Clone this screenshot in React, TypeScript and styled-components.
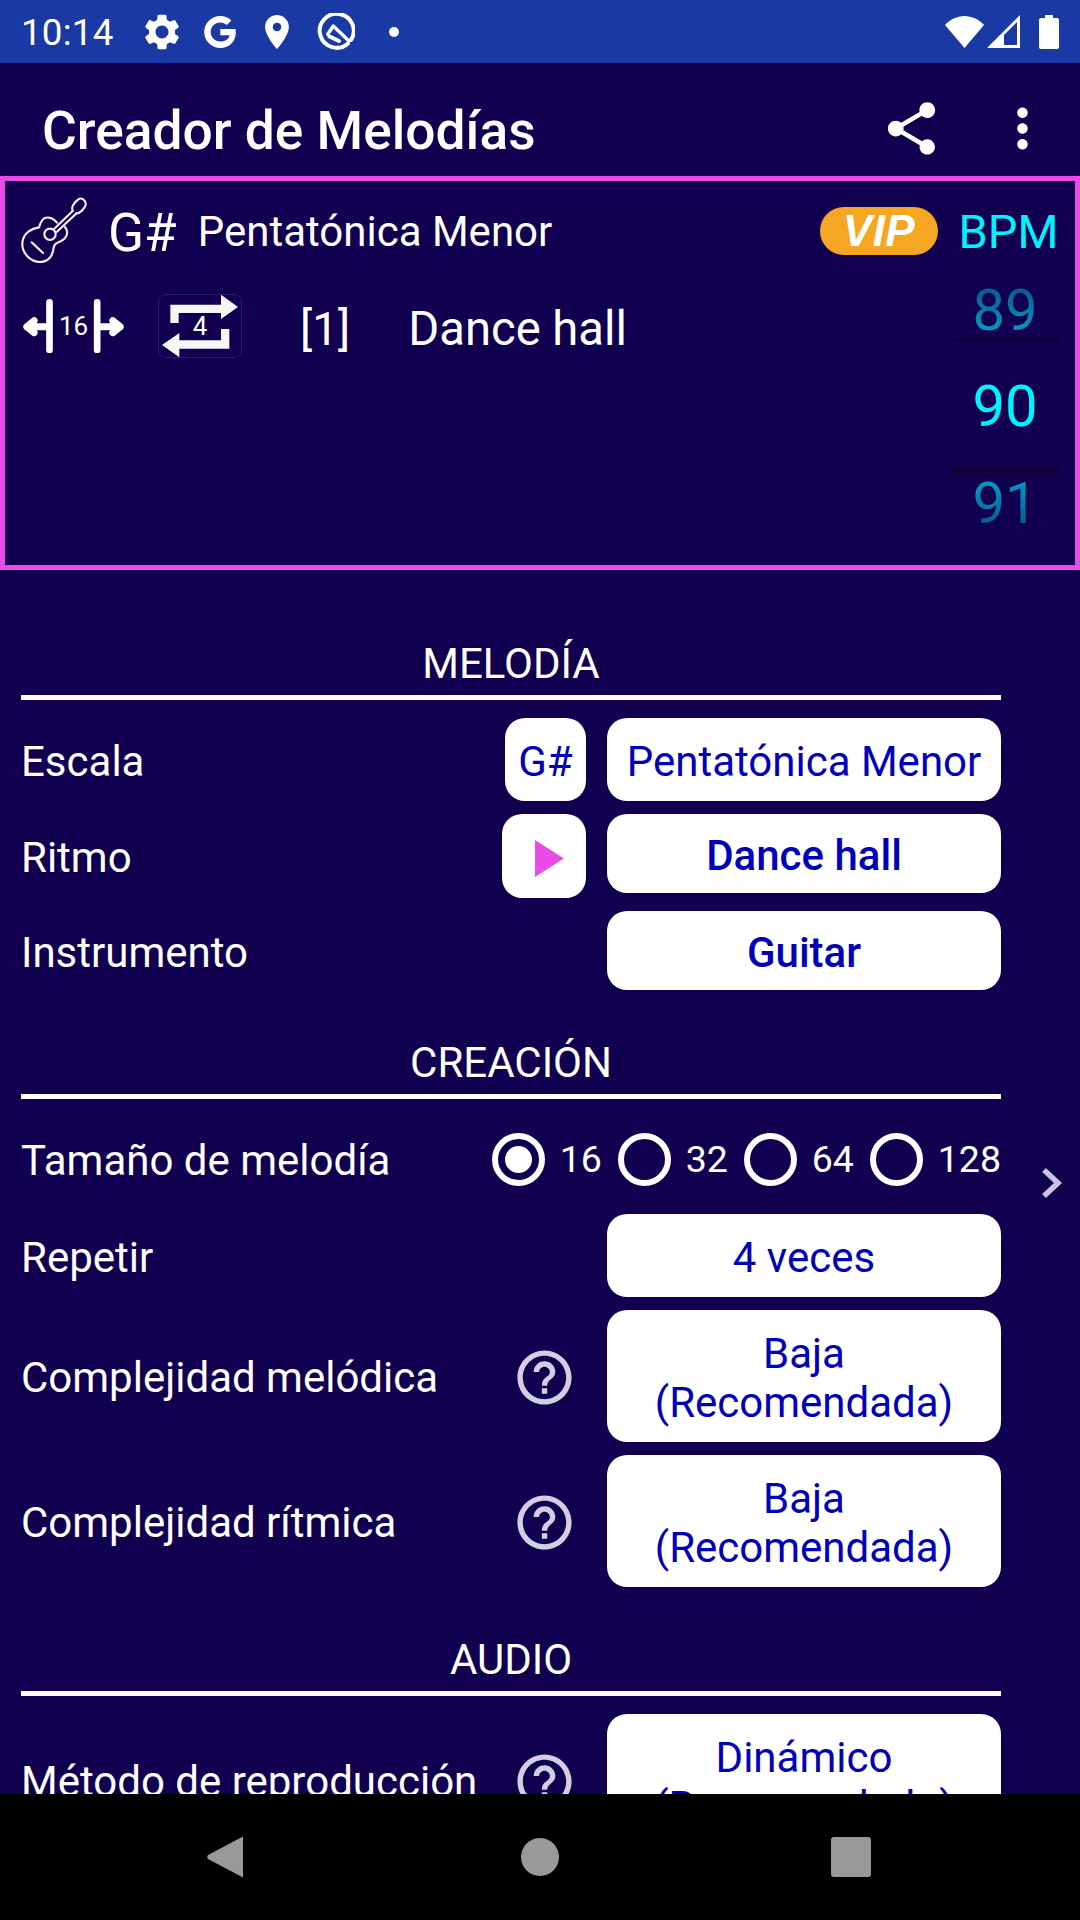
import React from "react";
import styled, { createGlobalStyle } from "styled-components";

const Global = createGlobalStyle`
  html, body { margin: 0; padding: 0; background: #110050; }
  * { box-sizing: border-box; }
`;

const Screen = styled.div`
  width: 1080px;
  height: 1920px;
  display: flex;
  flex-direction: column;
  overflow: hidden;
  background: #110050;
  color: #fff;
  font-family: Roboto, "Noto Sans", sans-serif;
`;

/* ---- system status bar ---- */
const StatusBar = styled.div`
  flex: none;
  height: 63px;
  background: #1a39a5;
  display: flex;
  align-items: center;
  padding: 0 21px;
`;
const Clock = styled.span`
  font-size: 36.75px;
  width: 123px;
  letter-spacing: 0.2px;
  padding-top: 2px;
`;
const StatusIcon = styled.svg<{ $w: number; $h: number; $gap?: number }>`
  width: ${(p) => p.$w}px;
  height: ${(p) => p.$h}px;
  margin-right: ${(p) => p.$gap ?? 0}px;
  flex: none;
  fill: #fff;
`;
const Spacer = styled.div`
  flex: 1;
`;

/* ---- action bar ---- */
const ActionBar = styled.div`
  flex: none;
  height: 113px;
  display: flex;
  align-items: center;
  padding: 17px 0 0 42px;
`;
const AppTitle = styled.h1`
  margin: 0;
  flex: 1;
  font-size: 53.3px;
  font-weight: 500;
  line-height: 1;
  padding-top: 8px;
`;
const BarIcon = styled.svg<{ $right: number }>`
  width: 63px;
  height: 63px;
  fill: #fff;
  margin-right: ${(p) => p.$right}px;
`;

/* ---- summary panel ---- */
const Panel = styled.section`
  flex: none;
  height: 394px;
  border: 5px solid #ea4ce9;
  display: flex;
  padding: 16px 16px 0 16px;
`;
const PanelMain = styled.div`
  flex: 1;
  display: flex;
  flex-direction: column;
`;
const SummaryRow = styled.div`
  display: flex;
  align-items: center;
  height: 66px;
`;
const SettingsRow = styled.div`
  display: flex;
  align-items: center;
  height: 64px;
  margin-top: 31px;
`;
const GuitarIcon = styled.svg`
  width: 66px;
  height: 66px;
  flex: none;
  fill: none;
  stroke: #f1eff7;
  stroke-width: 6.5px;
  stroke-linecap: round;
  stroke-linejoin: round;
`;
const KeyName = styled.span`
  font-size: 53px;
  margin-left: 21px;
  padding-top: 6px;
`;
const ScaleName = styled.span`
  font-size: 42px;
  margin-left: 21px;
  padding-top: 3px;
`;
const VipBadge = styled.span`
  margin-left: auto;
  margin-right: 16px;
  margin-top: 1px;
  width: 118px;
  height: 48px;
  border-radius: 24px;
  background: #f5a623;
  display: flex;
  align-items: center;
  justify-content: center;
  font-family: "Liberation Sans", sans-serif;
  font-style: italic;
  font-weight: 700;
  font-size: 44px;
  letter-spacing: 0.5px;
  color: #fff;
`;
const WidthMark = styled.div`
  width: 103px;
  height: 54px;
  margin-left: 1px;
  position: relative;
  display: flex;
  align-items: center;
  justify-content: center;
  font-size: 26px;
`;
const WidthArrows = styled.svg`
  position: absolute;
  inset: 0;
  width: 103px;
  height: 54px;
`;
const RepeatMark = styled.div`
  width: 84px;
  height: 64px;
  margin-left: 33px;
  border-radius: 8px;
  border: 1px solid #2a1b66;
  position: relative;
  display: flex;
  align-items: center;
  justify-content: center;
  font-size: 26px;
`;
const RepeatArrows = styled.svg`
  position: absolute;
  inset: -1px;
  width: 84px;
  height: 64px;
  fill: #f6f6f6;
`;
const Counter = styled.span`
  position: relative;
`;
const RhythmIndex = styled.span`
  font-size: 46px;
  margin-left: 58px;
  padding-top: 6px;
`;
const RhythmName = styled.span`
  font-size: 47.2px;
  margin-left: 58px;
  padding-top: 6px;
`;

const BpmColumn = styled.div`
  width: 105px;
  display: flex;
  flex-direction: column;
  align-items: center;
  color: #00f4ff;
`;
const BpmLabel = styled.div`
  height: 83px;
  padding-top: 2px;
  line-height: 66px;
  font-size: 47px;
  margin-left: 4px;
  white-space: nowrap;
`;
const BpmValue = styled.div<{ $fade?: "up" | "down" }>`
  width: 105px;
  height: ${(p) => (p.$fade ? "57px" : "126px")};
  flex: none;
  display: flex;
  align-items: center;
  justify-content: center;
  font-size: 58px;
  line-height: 58px;
  padding: 2px 3px 0 0;
  span {
    ${(p) =>
      p.$fade
        ? `background: linear-gradient(${p.$fade === "up" ? "180deg, #0a4f8a, #00a6cc" : "180deg, #00a6cc, #0a4f8a"});
           -webkit-background-clip: text;
           background-clip: text;
           color: transparent;`
        : ""}
  }
`;
const BpmRule = styled.div`
  width: 105px;
  height: 5px;
  flex: none;
  background: #0a0033;
`;

/* ---- settings list ---- */
const Content = styled.main`
  flex: 1;
  min-height: 0;
  overflow: hidden;
  position: relative;
  padding: 66px 79px 0 21px;
`;
const SectionTitle = styled.h2<{ $first?: boolean }>`
  margin: ${(p) => (p.$first ? "0" : "45px")} 0 0 0;
  height: 64px;
  border-bottom: 5px solid #fff;
  padding-bottom: 4px;
  font-size: 42px;
  line-height: 55px;
  font-weight: 400;
  text-align: center;
`;
const Rows = styled.div`
  display: flex;
  flex-direction: column;
  gap: 13px;
  margin-top: 18px;
`;
const Row = styled.div`
  display: flex;
  align-items: center;
  justify-content: flex-end;
`;
const Label = styled.span`
  flex: 1;
  font-size: 42px;
  padding-top: 3px;
  white-space: nowrap;
`;
const Aside = styled.div`
  width: 84px;
  display: flex;
  justify-content: flex-end;
  margin-right: 21px;
`;
const Choice = styled.button<{ $h: number; $bold?: boolean; $top?: boolean }>`
  width: 394px;
  height: ${(p) => p.$h}px;
  flex: none;
  align-self: ${(p) => (p.$top ? "flex-start" : "center")};
  border: 0;
  border-radius: 20px;
  background: #fff;
  color: #0000b8;
  font-family: inherit;
  font-size: 42px;
  line-height: 49px;
  font-weight: ${(p) => (p.$bold ? 500 : 400)};
  padding: 4px 0 0;
  text-align: center;
`;
const SquareButton = styled.button<{ $w: number; $h: number }>`
  width: ${(p) => p.$w}px;
  height: ${(p) => p.$h}px;
  border: 0;
  border-radius: 20px;
  background: #fff;
  color: #0000b8;
  font-family: inherit;
  font-size: 42px;
  padding: 4px 0 0;
  display: flex;
  align-items: center;
  justify-content: center;
`;
const PlayGlyph = styled.svg`
  width: 29px;
  height: 37px;
  fill: #ea4ce9;
  margin-left: 11px;
`;
const HelpIcon = styled.svg`
  width: 65px;
  height: 65px;
  fill: #d3cfe3;
  margin-right: 9px;
  margin-top: 2px;
`;
const RadioRow = styled.div`
  display: flex;
  align-items: center;
  height: 84px;
`;
const RadioGroup = styled.div`
  display: grid;
  grid-template-columns: repeat(3, 126px) auto;
  align-items: center;
`;
const RadioOption = styled.label`
  display: flex;
  align-items: center;
  gap: 15px;
  font-size: 37.5px;
`;
const RadioDot = styled.span<{ $on?: boolean }>`
  width: 53px;
  height: 53px;
  border-radius: 50%;
  border: 6px solid #fff;
  display: flex;
  align-items: center;
  justify-content: center;
  &::after {
    content: "";
    width: 27px;
    height: 27px;
    border-radius: 50%;
    background: ${(p) => (p.$on ? "#fff" : "transparent")};
  }
`;
const PageChevron = styled.svg`
  position: absolute;
  left: 1041px;
  top: 597px;
  width: 22px;
  height: 32px;
  fill: none;
  stroke: #c9c5dc;
  stroke-width: 5.5px;
`;

/* ---- navigation bar ---- */
const NavBar = styled.nav`
  flex: none;
  height: 126px;
  background: #000;
  display: flex;
  align-items: center;
  padding-left: 207px;
`;
const NavIcon = styled.svg<{ $w: number; $h: number; $left?: number }>`
  width: ${(p) => p.$w}px;
  height: ${(p) => p.$h}px;
  margin-left: ${(p) => p.$left ?? 0}px;
  fill: #999;
`;

const sizes = [
  { n: "16", on: true },
  { n: "32" },
  { n: "64" },
  { n: "128" },
];

const help =
  "M11 18h2v-2h-2v2zm1-16C6.48 2 2 6.48 2 12s4.48 10 10 10 10-4.48 10-10S17.52 2 12 2zm0 18c-4.41 0-8-3.59-8-8s3.59-8 8-8 8 3.59 8 8-3.59 8-8 8zm0-14c-2.21 0-4 1.79-4 4h2c0-1.1.9-2 2-2s2 .9 2 2c0 2-3 1.75-3 5h2c0-2.25 3-2.5 3-5 0-2.21-1.79-4-4-4z";

const Help = () => (
  <Aside>
    <HelpIcon viewBox="0 0 24 24">
      <path d={help} />
    </HelpIcon>
  </Aside>
);

export default function App() {
  return (
    <>
      <Global />
      <Screen>
        <StatusBar>
          <Clock>10:14</Clock>
          <StatusIcon $w={36} $h={36} $gap={23} viewBox="2 2 20 20">
            <path d="M19.14 12.94c.04-.3.06-.61.06-.94 0-.32-.02-.64-.07-.94l2.03-1.58a.49.49 0 0 0 .12-.61l-1.92-3.32a.488.488 0 0 0-.59-.22l-2.39.96c-.5-.38-1.03-.7-1.62-.94l-.36-2.54a.484.484 0 0 0-.48-.41h-3.84c-.24 0-.43.17-.47.41l-.36 2.54c-.59.24-1.13.57-1.62.94l-2.39-.96c-.22-.08-.47 0-.59.22L2.74 8.87c-.12.21-.08.47.12.61l2.03 1.58c-.05.3-.09.63-.09.94s.02.64.07.94l-2.03 1.58a.49.49 0 0 0-.12.61l1.92 3.32c.12.22.37.29.59.22l2.39-.96c.5.38 1.03.7 1.62.94l.36 2.54c.05.24.24.41.48.41h3.84c.24 0 .44-.17.47-.41l.36-2.54c.59-.24 1.13-.56 1.62-.94l2.39.96c.22.08.47 0 .59-.22l1.92-3.32c.12-.22.07-.47-.12-.61l-2.01-1.58zM12 15.6c-1.98 0-3.6-1.62-3.6-3.6s1.62-3.6 3.6-3.6 3.6 1.62 3.6 3.6-1.62 3.6-3.6 3.6z" />
          </StatusIcon>
          <StatusIcon $w={34} $h={34} $gap={27} viewBox="0 0 34 34">
            <path d="M17.3 14v6.2h9.3c-.7 3.7-3.9 6.3-9.3 6.3-5.5 0-9.6-4.4-9.6-9.5s4.1-9.5 9.6-9.5c2.6 0 4.8.9 6.5 2.5l4.6-4.6C25.600 2.800 21.800 1 17.300 1 8.500 1 1.200 8.200 1.200 17s7.300 16 16.100 16c9.300 0 15.500-6.500 15.500-15.700 0-1.200-.1-2.300-.3-3.300H17.300z" />
          </StatusIcon>
          <StatusIcon $w={26} $h={34} $gap={27} viewBox="5 2 14 20">
            <path d="M12 2C8.130 2 5 5.130 5 9c0 5.250 7 13 7 13s7-7.750 7-13c0-3.870-3.130-7-7-7zm0 9.500a2.500 2.500 0 0 1 0-5 2.500 2.500 0 0 1 0 5z" />
          </StatusIcon>
          <StatusIcon $w={38} $h={38} $gap={34} viewBox="0 0 38 38">
            <g fill="none" stroke="#fff" strokeLinecap="round" strokeLinejoin="round">
              <path strokeWidth="4" d="M31 30.500A17 17 0 1 1 34 27" />
              <path strokeWidth="3.400" d="M10.700 21.300 16.300 13 32 28" />
              <path strokeWidth="4" d="M12.500 23.500 22 28" />
            </g>
          </StatusIcon>
          <StatusIcon $w={10} $h={10} viewBox="0 0 10 10">
            <circle cx="5" cy="5" r="5" />
          </StatusIcon>
          <Spacer />
          <StatusIcon $w={39} $h={32} $gap={3} viewBox="0 0 39 32">
            <path d="M19.500 32 0 9C5 3.500 12 0 19.500 0S34 3.500 39 9z" />
          </StatusIcon>
          <StatusIcon $w={33} $h={33} $gap={19} viewBox="0 0 33 33">
            <path fillRule="evenodd" d="M33 0v33H0zM30 7 17 20v10h13z" />
          </StatusIcon>
          <StatusIcon $w={20} $h={34} viewBox="0 0 20 34">
            <path d="M6 0h8v3h4a2 2 0 0 1 2 2v27a2 2 0 0 1-2 2H2a2 2 0 0 1-2-2V5a2 2 0 0 1 2-2h4z" />
          </StatusIcon>
        </StatusBar>

        <ActionBar>
          <AppTitle>Creador de Melodías</AppTitle>
          <BarIcon $right={48} viewBox="0 0 24 24">
            <path d="M18 16.080c-.76 0-1.440.3-1.960.77L8.910 12.700c.05-.23.09-.46.09-.7s-.04-.47-.09-.7l7.050-4.110c.54.5 1.250.81 2.040.81 1.660 0 3-1.340 3-3s-1.340-3-3-3-3 1.340-3 3c0 .24.04.47.09.7L8.040 9.810C7.500 9.310 6.790 9 6 9c-1.660 0-3 1.340-3 3s1.340 3 3 3c.79 0 1.500-.31 2.040-.81l7.120 4.160c-.05.21-.08.43-.08.65 0 1.610 1.310 2.920 2.920 2.920 1.610 0 2.920-1.310 2.920-2.920s-1.310-2.920-2.920-2.920z" />
          </BarIcon>
          <BarIcon $right={26} viewBox="0 0 24 24">
            <path d="M12 8c1.100 0 2-.9 2-2s-.9-2-2-2-2 .9-2 2 .9 2 2 2zm0 2c-1.100 0-2 .9-2 2s.9 2 2 2 2-.9 2-2-.9-2-2-2zm0 6c-1.100 0-2 .9-2 2s.9 2 2 2 2-.9 2-2-.9-2-2-2z" />
          </BarIcon>
        </ActionBar>

        <Panel>
          <PanelMain>
            <SummaryRow>
              <GuitarIcon viewBox="18 20 198 198">
                <path d="M126 97C116 84 100 78 88 84 77 90 76 102 72 111 52 114 24 126 22 158 20 188 46 215 76 215 100 215 114 196 116 172 118 160 126 157 138 152 156 144 162 124 150 110" />
                <circle cx="105" cy="132" r="17" />
                <path d="M118 115 173 62M126 124 183 70" />
                <path d="M173 62C168 48 178 36 190 27 200 20 214 30 212 44 208 56 196 68 183 70" />
                <path d="M50 156 84 188" />
              </GuitarIcon>
              <KeyName>G#</KeyName>
              <ScaleName>Pentatónica Menor</ScaleName>
              <VipBadge>VIP</VipBadge>
            </SummaryRow>
            <SettingsRow>
              <WidthMark>
                <WidthArrows viewBox="22 42 308 162">
                  <g fill="none" stroke="#fff" strokeLinecap="round" strokeLinejoin="round">
                    <path strokeWidth="20" d="M104 52V195M247 52V195" />
                    <path strokeWidth="21" d="M36 125H100M58 107 36 125 58 143M250 125H316M294 107 316 125 294 143" />
                  </g>
                </WidthArrows>
                <Counter>16</Counter>
              </WidthMark>
              <RepeatMark>
                <RepeatArrows viewBox="428 28 252 192">
                  <path d="M465 115V60H617V30L668 67 617 103V85H490V115ZM642 133V192H492V218L440 181 492 145V167H617V133Z" />
                </RepeatArrows>
                <Counter>4</Counter>
              </RepeatMark>
              <RhythmIndex>[1]</RhythmIndex>
              <RhythmName>Dance hall</RhythmName>
            </SettingsRow>
          </PanelMain>
          <BpmColumn>
            <BpmLabel>BPM</BpmLabel>
            <BpmValue $fade="up">
              <span>89</span>
            </BpmValue>
            <BpmRule />
            <BpmValue>90</BpmValue>
            <BpmRule />
            <BpmValue $fade="down">
              <span>91</span>
            </BpmValue>
          </BpmColumn>
        </Panel>

        <Content>
          <SectionTitle $first>MELODÍA</SectionTitle>
          <Rows>
            <Row>
              <Label>Escala</Label>
              <Aside>
                <SquareButton $w={81} $h={83}>G#</SquareButton>
              </Aside>
              <Choice $h={83}>Pentatónica Menor</Choice>
            </Row>
            <Row>
              <Label>Ritmo</Label>
              <Aside>
                <SquareButton $w={84} $h={84}>
                  <PlayGlyph viewBox="0 0 29 37">
                    <path d="M0 0 29 18.500 0 37z" />
                  </PlayGlyph>
                </SquareButton>
              </Aside>
              <Choice $h={79} $bold $top>Dance hall</Choice>
            </Row>
            <Row>
              <Label>Instrumento</Label>
              <Choice $h={79} $bold>Guitar</Choice>
            </Row>
          </Rows>

          <SectionTitle>CREACIÓN</SectionTitle>
          <Rows>
            <RadioRow>
              <Label>Tamaño de melodía</Label>
              <RadioGroup>
                {sizes.map((s) => (
                  <RadioOption key={s.n}>
                    <RadioDot $on={s.on} />
                    {s.n}
                  </RadioOption>
                ))}
              </RadioGroup>
            </RadioRow>
            <Row>
              <Label>Repetir</Label>
              <Choice $h={83}>4 veces</Choice>
            </Row>
            <Row>
              <Label>Complejidad melódica</Label>
              <Help />
              <Choice $h={132}>
                Baja
                <br />
                (Recomendada)
              </Choice>
            </Row>
            <Row>
              <Label>Complejidad rítmica</Label>
              <Help />
              <Choice $h={132}>
                Baja
                <br />
                (Recomendada)
              </Choice>
            </Row>
          </Rows>

          <SectionTitle>AUDIO</SectionTitle>
          <Rows>
            <Row>
              <Label>Método de reproducción</Label>
              <Help />
              <Choice $h={132}>
                Dinámico
                <br />
                (Recomendado)
              </Choice>
            </Row>
          </Rows>

          <PageChevron viewBox="0 0 22 32">
            <path d="M3 3l14 13L3 29" />
          </PageChevron>
        </Content>

        <NavBar>
          <NavIcon $w={36} $h={42} viewBox="0 0 36 42">
            <path d="M35 1c1-1 1 0 1 1v38c0 1 0 2-1 1L1 23c-1-1-1-3 0-4z" />
          </NavIcon>
          <NavIcon $w={38} $h={38} $left={278} viewBox="0 0 38 38">
            <circle cx="19" cy="19" r="19" />
          </NavIcon>
          <NavIcon $w={40} $h={40} $left={272} viewBox="0 0 40 40">
            <rect width="40" height="40" rx="3" />
          </NavIcon>
        </NavBar>
      </Screen>
    </>
  );
}
